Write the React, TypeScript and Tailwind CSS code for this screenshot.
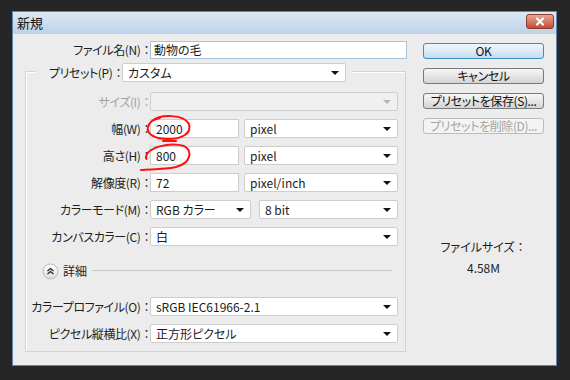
import React from 'react';

const FONT = "font-['Meiryo_UI','Noto_Sans_CJK_JP',sans-serif] [font-feature-settings:'palt'] whitespace-nowrap";

function Colon() {
  return <span className="[font-feature-settings:normal]">：</span>;
}

function Arrow({ muted }: { muted?: boolean }) {
  return (
    <span
      className={`ml-auto mr-[6px] h-0 w-0 border-x-[4px] border-t-[4px] border-x-transparent ${
        muted ? 'border-t-[#b4b4b4]' : 'border-t-[#111]'
      }`}
    />
  );
}

function Select({ value, w, disabled }: { value?: string; w: string; disabled?: boolean }) {
  return (
    <div
      className={`flex h-[19px] ${w} items-center rounded-[2px] border ${
        disabled ? 'border-[#cfcfcf] bg-[#f0f0f0]' : 'border-[#cdcdcd] bg-white'
      } pl-[5px] text-[12px] text-[#1b1b1b]`}
    >
      <span className="leading-none">{value}</span>
      <Arrow muted={disabled} />
    </div>
  );
}

function TextBox({ value, w }: { value: string; w: string }) {
  return (
    <div className={`flex h-[19px] ${w} items-center border border-[#cdcdcd] bg-white pl-[5px] text-[12px] text-[#1b1b1b]`}>
      {value}
    </div>
  );
}

function Row({ label, children, muted }: { label: string; children: React.ReactNode; muted?: boolean }) {
  return (
    <div className="flex h-[19px] items-center">
      <div
        className={`mr-[-2px] w-[126px] text-right text-[12px] tracking-[-0.4px] ${
          muted ? 'text-[#a3a3a3]' : 'text-[#1e1e1e]'
        }`}
      >
        {label}
        <Colon />
      </div>
      {children}
    </div>
  );
}

function Button({ label, primary, disabled }: { label: string; primary?: boolean; disabled?: boolean }) {
  const look = primary
    ? 'border-[#3c8fc4] bg-gradient-to-b from-[#eef6fc] via-[#dcebf7] to-[#c6dcee] text-[#111]'
    : disabled
      ? 'border-[#b8bcbf] bg-[#f3f3f3] text-[#a5a5a5]'
      : 'border-[#7a7a7a] bg-gradient-to-b from-[#f6f6f6] via-[#e6e6e6] to-[#d4d4d4] text-[#111]';
  return (
    <div
      className={`flex h-[16px] w-[121px] items-center justify-center rounded-[3px] border text-[12px] leading-none tracking-[-0.4px] ${look}`}
    >
      {label}
    </div>
  );
}

export default function App() {
  return (
    <div className={`relative h-[380px] w-[570px] overflow-hidden bg-[#262626] pl-[12px] pt-[11px] ${FONT}`}>
      <div className="flex h-[355px] w-[545px] flex-col border border-[#5f86ad] bg-[#ececec]">
        {/* title bar */}
        <div className="flex h-[22px] items-center bg-gradient-to-b from-[#dce8f4] to-[#bdd2e9] pl-[4px] pr-[2px]">
          <span className="text-[13px] text-[#111]">新規</span>
          <div className="ml-auto mt-[-4px] flex h-[15px] w-[28px] items-center justify-center rounded-[3px] border border-[#8c3b2f] bg-gradient-to-b from-[#e9a593] to-[#c54a35]">
            <svg width="10" height="9" viewBox="0 0 10 9">
              <path d="M2 1.5 L8 7.5 M8 1.5 L2 7.5" stroke="#fff" strokeWidth="2.2" strokeLinecap="round" />
            </svg>
          </div>
        </div>

        <div className="flex flex-1">
          {/* left column */}
          <div className="w-[400px] pt-[7px]">
            <div className="flex h-[18px] items-center">
              <div className="mr-[-2px] w-[139px] text-right text-[12px] tracking-[-0.4px] text-[#1e1e1e]">
                ファイル名(N)
                <Colon />
              </div>
              <div className="flex h-[18px] w-[257px] items-center border border-[#a9c3dc] bg-white pl-[3px] text-[12px] text-[#1b1b1b]">
                動物の毛
              </div>
            </div>

            <div className="ml-[12px] mt-[12px] h-[281px] w-[381px] border border-[#cdd5db] shadow-[inset_1px_1px_0_#fff]">
              <div className="ml-[10px] mt-[-9px] flex h-[19px] w-[316px] items-center bg-[#ececec]">
                <div className="mr-[-2px] w-[88px] text-right text-[12px] tracking-[-0.4px] text-[#1e1e1e]">
                  プリセット(P)
                  <Colon />
                </div>
                <Select value="カスタム" w="w-[224px]" />
              </div>

              <div className="mt-[10px] flex flex-col gap-[8px]">
                <Row label="サイズ(I)" muted>
                  <Select w="w-[248px]" disabled />
                </Row>
                <Row label="幅(W)">
                  <TextBox value="2000" w="w-[89px]" />
                  <div className="ml-[5px]">
                    <Select value="pixel" w="w-[154px]" />
                  </div>
                </Row>
                <Row label="高さ(H)">
                  <TextBox value="800" w="w-[89px]" />
                  <div className="ml-[5px]">
                    <Select value="pixel" w="w-[154px]" />
                  </div>
                </Row>
                <Row label="解像度(R)">
                  <TextBox value="72" w="w-[89px]" />
                  <div className="ml-[5px]">
                    <Select value="pixel/inch" w="w-[154px]" />
                  </div>
                </Row>
                <Row label="カラーモード(M)">
                  <Select value="RGB カラー" w="w-[101px]" />
                  <div className="ml-[8px]">
                    <Select value="8 bit" w="w-[139px]" />
                  </div>
                </Row>
                <Row label="カンバスカラー(C)">
                  <Select value="白" w="w-[248px]" />
                </Row>
              </div>

              <div className="ml-[16px] mt-[17px] flex h-[16px] items-center">
                <svg width="17" height="17" viewBox="0 0 17 17">
                  <defs>
                    <linearGradient id="cg" x1="0" y1="0" x2="0" y2="1">
                      <stop offset="0" stopColor="#ffffff" />
                      <stop offset="1" stopColor="#dcdcdc" />
                    </linearGradient>
                  </defs>
                  <circle cx="8.5" cy="8.5" r="7.5" fill="url(#cg)" stroke="#b9b9b9" />
                  <path d="M5.5 8 L8.5 5.5 L11.5 8 M5.5 11 L8.5 8.5 L11.5 11" fill="none" stroke="#222" strokeWidth="1.3" />
                </svg>
                <span className="ml-[4px] text-[12px] text-[#1e1e1e]">詳細</span>
                <div className="ml-[5px] h-[2px] w-[300px] border-t border-[#c9c9c9] border-b-white" />
              </div>

              <div className="mt-[18px] flex flex-col gap-[8px]">
                <Row label="カラープロファイル(O)">
                  <Select value="sRGB IEC61966-2.1" w="w-[248px]" />
                </Row>
                <Row label="ピクセル縦横比(X)">
                  <Select value="正方形ピクセル" w="w-[248px]" />
                </Row>
              </div>
            </div>
          </div>

          {/* right column */}
          <div className="flex w-[143px] flex-col pl-[10px] pt-[9px]">
            <div className="flex flex-col gap-[9px]">
              <Button label="OK" primary />
              <Button label="キャンセル" />
              <Button label="プリセットを保存(S)..." />
              <Button label="プリセットを削除(D)..." disabled />
            </div>
            <div className="mt-[105px] w-[121px] text-center text-[12px] leading-[16px] text-[#1e1e1e]">
              ファイルサイズ
              <Colon />
            </div>
            <div className="mt-[5px] w-[121px] text-center text-[12px] leading-[16px] text-[#1e1e1e]">4.58M</div>
          </div>
        </div>
      </div>

      {/* red hand-drawn marks */}
      <svg className="pointer-events-none absolute left-0 top-0" width="570" height="380" viewBox="0 0 570 380">
        <path
          d="M152 121 C160 114 184 114 189 124 C192 134 181 139 168 139 C155 139 146 134 148 127 C149 122 154 119 160 118 M163 141 L176 141"
          fill="none"
          stroke="#ff1010"
          strokeWidth="2"
          strokeLinecap="round"
        />
        <path
          d="M146 158 C146 147 170 142 184 146 C193 151 191 163 176 167 C162 170 150 169 141 170"
          fill="none"
          stroke="#ff1010"
          strokeWidth="2"
          strokeLinecap="round"
        />
      </svg>
    </div>
  );
}
